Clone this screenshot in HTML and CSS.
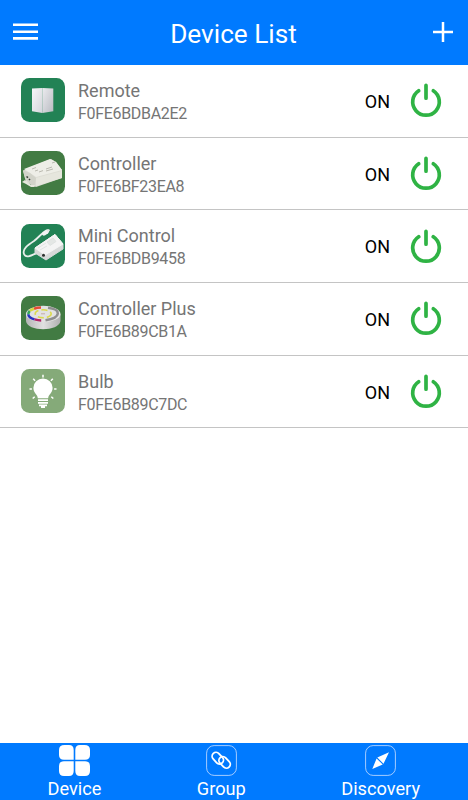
FILE: index.html
```html
<!DOCTYPE html>
<html lang="en">
<head>
<meta charset="utf-8">
<title>Device List</title>
<link rel="stylesheet" href="styles.css">
</head>
<body>
<svg class="defs" aria-hidden="true">
  <defs>
    <linearGradient id="faceL" x1="0" y1="0" x2="1" y2="1"><stop offset="0" stop-color="#f6f6f8"/><stop offset="1" stop-color="#d4d5db"/></linearGradient>
    <linearGradient id="faceR" x1="0" y1="0" x2="1" y2="1"><stop offset="0" stop-color="#ececef"/><stop offset="1" stop-color="#b9bbc2"/></linearGradient>
    <linearGradient id="disc" x1="0" y1="0" x2="1" y2="0"><stop offset="0" stop-color="#b5b5b5"/><stop offset=".5" stop-color="#e0e0e0"/><stop offset="1" stop-color="#b0b0b0"/></linearGradient>
    <symbol id="power" viewBox="0 0 32 36">
      <path d="M8.7 8.8A13.3 13.3 0 1 0 23.3 8.8M16 3.4V16.2" fill="none" stroke="#2fb344" stroke-width="3.7" stroke-linecap="round"/>
    </symbol>
  </defs>
</svg>
<div class="app">
  <header class="header">
    <svg class="menu" viewBox="0 0 25 18"><path d="M0 1.7h25M0 8.8h25M0 15.4h25" stroke="#fff" stroke-width="2.6"/></svg>
    <h1 class="title">Device List</h1>
    <svg class="add" viewBox="0 0 20 20"><path d="M0 10h20M10 0v20" stroke="#fff" stroke-width="2.5"/></svg>
  </header>
  <main class="list">
    <section class="row">
      <svg class="thumb" viewBox="0 0 44 44"><rect width="44" height="44" rx="8.5" fill="#228255"/>
        <path d="M11 10.5 21.3 10V35L11 33.2Z" fill="url(#faceL)"/><path d="M21.3 10 32.3 10.6V33.2L21.3 35Z" fill="url(#faceR)"/></svg>
      <div class="info"><div class="name">Remote</div><div class="mac">F0FE6BDBA2E2</div></div>
      <span class="state">ON</span><svg class="power"><use href="#power"/></svg>
    </section>
    <section class="row">
      <svg class="thumb" viewBox="0 0 44 44"><rect width="44" height="44" rx="8.5" fill="#427b43"/>
        <path d="M2 20 5 18 30 8 35 11 41 19V27L15 36 11 34 5 31Z" fill="#deded5"/>
        <path d="M3 18 29 8 35 11 41 19 15 26 9 22Z" fill="#eeeee7"/>
        <path d="M2 19 9 22 15 27 14 36 9 33 4 27Z" fill="#d2d3c9"/>
        <path d="M15 27 41 20V27L15 35Z" fill="#e6e6dd"/>
        <path d="M11 18 15 16.5M14 20 17 19M18 21 22 19.6M25 18 31 16M25 20 32 18M31 12 34 11" stroke="#bbbab0" stroke-width="1"/>
        <path d="M5.5 25.5 7 26.7M8 28 9 29" stroke="#373d36" stroke-width="1.6"/><path d="M1 31 4 29 10 34 14 34 13 36H10L5 33Z" fill="#e7e7dd"/></svg>
      <div class="info"><div class="name">Controller</div><div class="mac">F0FE6BF23EA8</div></div>
      <span class="state">ON</span><svg class="power"><use href="#power"/></svg>
    </section>
    <section class="row">
      <svg class="thumb" viewBox="0 0 44 44"><rect width="44" height="44" rx="8.5" fill="#228255"/>
        <path d="M22 9C18 12 17 14 13 17 7 21 1 25 3 30 5 35 11 31 18 28" fill="none" stroke="#e8eeeb" stroke-width="1.8"/>
        <path d="M23 9.5 26 7.5" stroke="#f4f4f4" stroke-width="4.2" stroke-linecap="round"/><path d="M26 7 28.5 5.8" stroke="#e5e7e6" stroke-width="2"/>
        <path d="M14 24 34 10.5 42 20V25L25 36 14 29Z" fill="#d7d9d9" stroke="#d7d9d9" stroke-linejoin="round"/>
        <path d="M14 24 34 10.5 42 20 24 31Z" fill="#f4f4f4" stroke="#f4f4f4" stroke-linejoin="round"/>
        <path d="M26 18 32 14 35 17.5 29 21.5ZM17 24 25 19M19 26 26 22" fill="#e4e7e5" stroke="#dce0de" stroke-width=".8"/>
        <circle cx="22.5" cy="31.3" r="1.5" fill="#303331"/></svg>
      <div class="info"><div class="name">Mini Control</div><div class="mac">F0FE6BDB9458</div></div>
      <span class="state">ON</span><svg class="power"><use href="#power"/></svg>
    </section>
    <section class="row">
      <svg class="thumb" viewBox="0 0 44 44"><rect width="44" height="44" rx="8.5" fill="#427b43"/>
        <path d="M5 18V25C6 36 38 36 39.5 25V18Z" fill="url(#disc)"/>
        <ellipse cx="22.2" cy="18" rx="17.3" ry="8.2" fill="#e2e2e2"/>
        <g fill="none" stroke-width="2.5">
          <path d="M20 11.6C17 11.6 14.8 12.1 13 12.7" stroke="#e34b35"/><path d="M13 12.7C11.3 13.3 9.6 14 8.7 15" stroke="#d5d83a"/>
          <path d="M8.7 15C7.4 16.3 7.3 17.2 7.3 18.4" stroke="#35a85b"/><path d="M7.3 18.4C7.5 20.5 9.8 22.4 13.6 23.4" stroke="#2633c0"/><path d="M13.6 23.4C16 24.1 18 24.4 20.2 24.4" stroke="#b22367"/>
          <path d="M27 11.8C40 13.3 41 21.5 24.5 24.2" stroke="#8e8e8e"/>
          <ellipse cx="22.2" cy="17.8" rx="8" ry="4" stroke="#dbd94d" stroke-width="1.6" stroke-dasharray="6 3"/>
        </g><path d="M20 17.8h4" stroke="#c5aaa9"/></svg>
      <div class="info"><div class="name">Controller Plus</div><div class="mac">F0FE6B89CB1A</div></div>
      <span class="state">ON</span><svg class="power"><use href="#power"/></svg>
    </section>
    <section class="row">
      <svg class="thumb" viewBox="0 0 44 44"><rect width="44" height="44" rx="8.5" fill="#85aa79"/>
        <path d="M16.8 29.2C16.8 25.4 12.4 24.5 12.4 18.7A9.6 9.2 0 0 1 31.6 18.7C31.6 24.5 27.2 25.4 27.2 29.2Z" fill="#fff"/>
        <path d="M17 31.1h10M17 33.8h10M18 36.4h8M20 38.1h4" stroke="#fff" stroke-width="1.7"/>
        <path d="M22 5.8v2.6M12.2 9.7l1.9 2M31.8 9.7l-1.9 2M8.5 20h2.4M33.1 20h2.4M11.7 29.5l2-1.8M32.3 29.5l-2-1.8" stroke="#fff" stroke-width="1.5"/></svg>
      <div class="info"><div class="name">Bulb</div><div class="mac">F0FE6B89C7DC</div></div>
      <span class="state">ON</span><svg class="power"><use href="#power"/></svg>
    </section>
  </main>
  <nav class="tabs">
    <div class="tab">
      <svg class="tab-icon" viewBox="0 0 31 31" fill="#fff"><path d="M5.5 0H10Q14.7 0 14.7 5V14.7H5Q0 14.7 0 10V5Q0 0 5.5 0ZM21 0h4.5Q31 0 31 5v5q0 4.7-5 4.7H16.3V5Q16.3 0 21 0ZM5 16.3h9.7V26q0 5-4.7 5H5Q0 31 0 26v-5Q0 16.3 5 16.3ZM16.3 16.3H26q5 0 5 4.7v5q0 5-5 5H21q-4.7 0-4.7-5Z"/></svg>
      <span>Device</span>
    </div>
    <div class="tab">
      <svg class="tab-icon" viewBox="0 0 31 31" fill="none" stroke="#fff"><rect x=".6" y=".6" width="29.8" height="29.8" rx="7.5" stroke="#a5ccff"/>
        <g stroke-width="1.8"><rect x="5.3" y="9.3" width="13" height="7.8" rx="3.9" transform="rotate(47 11.8 13.2)"/><rect x="12.1" y="13.5" width="13" height="7.8" rx="3.9" transform="rotate(47 18.6 17.4)"/></g></svg>
      <span>Group</span>
    </div>
    <div class="tab">
      <svg class="tab-icon" viewBox="0 0 31 31"><rect x=".6" y=".6" width="29.8" height="29.8" rx="7.5" fill="none" stroke="#a5ccff"/>
        <path d="M24 7.3 12.3 12.6 18.5 18.8ZM7.3 24 11.6 13.4 17.7 19.5Z" fill="#fff"/></svg>
      <span>Discovery</span>
    </div>
  </nav>
</div>
</body>
</html>
```
FILE: styles.css
```css
* { box-sizing: border-box; }
body { margin: 0; background: #fff; font-family: Roboto, "Liberation Sans", sans-serif; }
svg { display: block; flex: none; }
.defs { position: absolute; width: 0; height: 0; }
.app { display: flex; flex-direction: column; height: 800px; }
.header { display: flex; align-items: center; justify-content: space-between; height: 65px; padding: 0 15px 1px 13px; background: #007aff; color: #fff; }
.menu { width: 25px; height: 18px; }
.title { margin: 3px 4px 0 0; font-size: 26.2px; line-height: 32px; font-weight: 400; }
.add { width: 20px; height: 20px; }
.list { flex: 1; }
.row { display: flex; align-items: center; height: 72.7px; padding: 0 26px 1px 21px; border-bottom: 1px solid #c4c4c4; }
.thumb { width: 44px; height: 44px; }
.info { flex: 1; margin: 3px 0 0 13px; color: #757575; }
.name { font-size: 18px; line-height: 24px; }
.mac { font-size: 16px; line-height: 22px; letter-spacing: -0.32px; }
.state { margin: 3px 20px 0 0; font-size: 18px; line-height: 24px; color: #000; }
.power { width: 32px; height: 36px; }
.tabs { display: flex; justify-content: space-between; height: 57px; padding: 2px 48px 0 47.5px; background: #007aff; color: #fff; font-size: 18.2px; line-height: 26px; }
.tab { display: flex; flex-direction: column; align-items: center; }
.tab-icon { width: 31px; height: 31px; }
```
